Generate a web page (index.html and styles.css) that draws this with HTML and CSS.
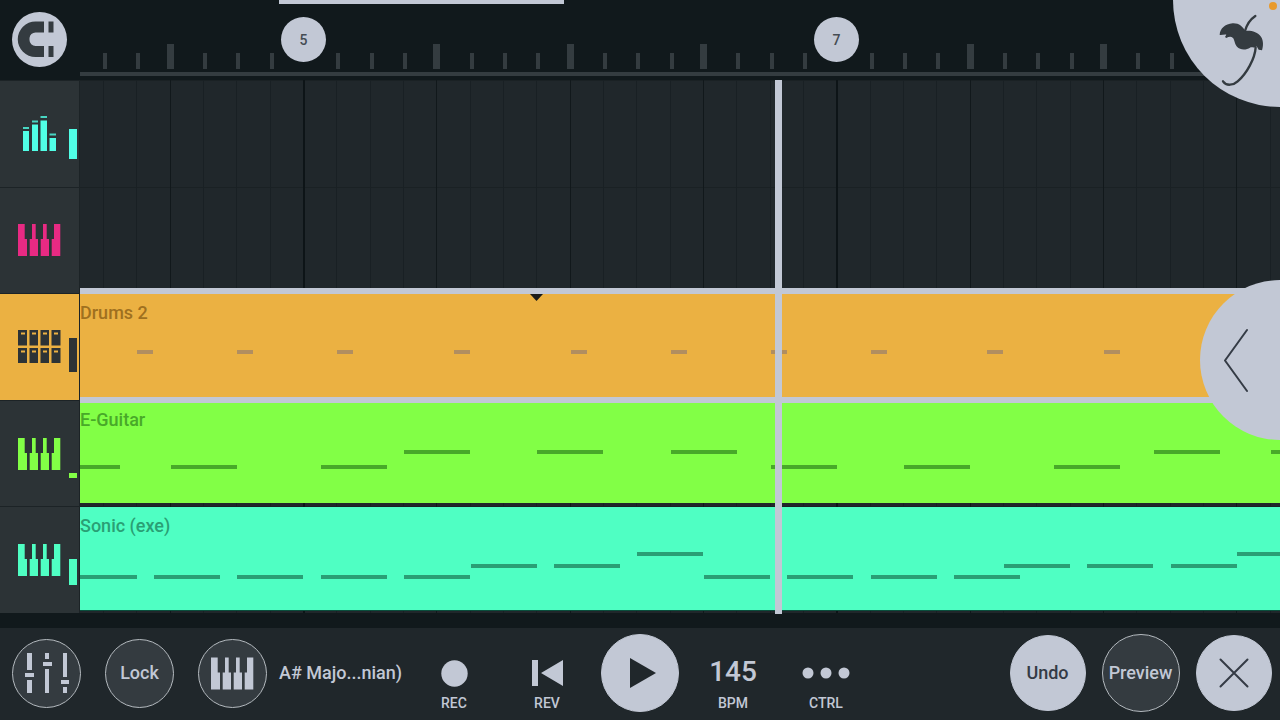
FILE: index.html
```html
<!DOCTYPE html>
<html lang="en">
<head>
  <meta charset="UTF-8" />
  <meta name="viewport" content="width=device-width, initial-scale=1.0"/>
  <title>Playlist</title>
  <link rel="stylesheet" href="styles.css">
</head>
<body>
  <svg class="defs" aria-hidden="true">
    <symbol id="keys" viewBox="0 0 43 32">
      <path d="M0 0H6.7V15H9V32H0zM14 0H17.7V15H20V32H11.7V15H14zM25 0H28.7V15H31V32H22.7V15H25zM36 0H42.3V32H33.7V15H36z"/>
    </symbol>
  </svg>

  <header class="topbar">
    <button class="snap" aria-label="Snap">
      <svg width="55" height="55" viewBox="0 0 55 55">
        <path d="M32 9.500H23.500A17.500 17.500 0 0 0 23.500 45H32V34H23.500A6 6 0 0 1 17.500 28V26A6 6 0 0 1 23.500 20.500H32zM36.500 9.500H41.500V20.500H36.500zM36.500 34H41.500V45H36.500z"/>
      </svg>
    </button>
    <div class="ruler">
      <div class="overview"></div>
      <svg class="ticks" id="ticks"></svg>
      <div class="bars" id="bars"></div>
    </div>
  </header>

  <main class="playlist">
    <div class="heads">
      <button class="head teal" aria-label="Master">
        <svg width="43" height="44" viewBox="0 0 43 44">
          <path d="M5 19H11V39H5zM14 12.500H20V39H14zM22.500 8.500H29V39H22.500zM31.500 26H38V39H31.500z"/>
          <path class="peaks" d="M5 15H11V17H5zM14 8.500H20V10.500H14zM22.500 4H29V6H22.500zM31.500 21.500H38V23.500H31.500z"/>
        </svg>
        <span class="meter" style="height: 30px"></span>
      </button>
      <button class="head pink" aria-label="Synth">
        <svg width="43" height="32"><use href="#keys"/></svg>
        <span class="meter" style="height: 0"></span>
      </button>
      <button class="head active" aria-label="Drums 2">
        <svg width="43" height="33" viewBox="0 0 43 33">
          <path fill-rule="evenodd" d="M0 0h9v15.500H0zM3 2.500v2h4v-2zM11.500 0h8.500v15.500h-8.500zM14 2.500v2h4v-2zM22.500 0h8.500v15.500h-8.500zM25 2.500v2h4v-2zM33.500 0h9v15.500h-9zM36 2.500v2h4v-2zM0 18h9v15H0zM3 20.500v2h4v-2zM11.500 18h8.500v15h-8.500zM14 20.500v2h4v-2zM22.500 18h8.500v15h-8.500zM25 20.500v2h4v-2zM33.500 18h9v15h-9zM36 20.500v2h4v-2z"/>
        </svg>
        <span class="meter" style="height: 34px"></span>
      </button>
      <button class="head green" aria-label="E-Guitar">
        <svg width="43" height="32"><use href="#keys"/></svg>
        <span class="meter" style="height: 5px"></span>
      </button>
      <button class="head mint" aria-label="Sonic (exe)">
        <svg width="43" height="32"><use href="#keys"/></svg>
        <span class="meter" style="height: 26px"></span>
      </button>
    </div>

    <div class="lanes">
      <svg class="grid" id="grid"></svg>
      <div class="lane"></div>
      <div class="lane"></div>
      <div class="lane">
        <div class="clip drums selected">
          <span class="clip-name">Drums 2</span>
          <svg class="notes" data-track="drums"><path class="marker" d="M450 0H463L456.500 7z"/></svg>
        </div>
      </div>
      <div class="lane">
        <div class="clip guitar">
          <span class="clip-name">E-Guitar</span>
          <svg class="notes" data-track="guitar"></svg>
        </div>
      </div>
      <div class="lane">
        <div class="clip sonic">
          <span class="clip-name">Sonic (exe)</span>
          <svg class="notes" data-track="sonic"></svg>
        </div>
      </div>
      <div class="playhead" id="playhead"></div>
    </div>
  </main>

  <footer class="toolbar">
    <div class="tools">
      <div class="cell">
        <button class="round small" aria-label="Mixer">
          <svg width="44" height="40" viewBox="0 0 44 40">
            <path d="M2 0h5v17H2zM0 20h9v4H0zM2 27h5v13H2zM20 0h4v6h-4zM18 9h9v4h-9zM20 16h4v24h-4zM38 0h4v24h-4zM36 27h8v4h-8zM38 34h4v6h-4z"/>
          </svg>
        </button>
      </div>
      <div class="cell"><button class="round small">Lock</button></div>
      <div class="cell">
        <button class="round small" aria-label="Scale">
          <svg width="43" height="33"><use href="#keys"/></svg>
        </button>
      </div>
      <span class="scale">A# Majo...nian)</span>
    </div>

    <div class="transport">
      <button class="control">
        <span class="glyph"><svg width="27" height="27" viewBox="0 0 27 27"><circle cx="13.500" cy="13.500" r="13.200"/></svg></span>
        <span class="caption">REC</span>
      </button>
      <button class="control">
        <span class="glyph"><svg width="31" height="26" viewBox="0 0 31 26"><path d="M0 0H6V26H0zM31 0V26L9 13z"/></svg></span>
        <span class="caption">REV</span>
      </button>
      <div class="cell">
        <button class="round filled big" aria-label="Play">
          <svg class="play" width="31" height="30" viewBox="0 0 31 30"><path d="M5 0L31 15L5 30z"/></svg>
        </button>
      </div>
      <button class="control">
        <span class="glyph tempo">145</span>
        <span class="caption">BPM</span>
      </button>
      <button class="control">
        <span class="glyph"><svg width="48" height="12" viewBox="0 0 48 12"><circle cx="6" cy="6" r="5.500"/><circle cx="24" cy="6" r="5.500"/><circle cx="42" cy="6" r="5.500"/></svg></span>
        <span class="caption">CTRL</span>
      </button>
    </div>

    <div class="actions">
      <div class="cell"><button class="round filled">Undo</button></div>
      <div class="cell"><button class="round big">Preview</button></div>
      <div class="cell">
        <button class="round filled" aria-label="Close">
          <svg class="stroke" width="30" height="30" viewBox="0 0 30 30"><path d="M1.500 1.500L28.500 28.500M28.500 1.500L1.500 28.500"/></svg>
        </button>
      </div>
    </div>
  </footer>

  <button class="menu" aria-label="Menu">
    <svg width="48" height="73" viewBox="350 40 144 219">
      <path d="M358 103C359 84 374 70 397 68C416 67 427 78 435 91C452 89 472 94 482 108C490 120 489 136 485 149L475 147L469 137C462 144 455 138 449 141C438 148 420 149 410 138C402 129 403 117 398 112C391 106 385 109 378 112L374 109L378 102C371 101 364 104 358 103z"/>
      <path class="trunk" d="M434 91C439 73 450 56 465 46M466 140C464 174 438 220 412 242C399 254 378 257 368 242"/>
    </svg>
    <span class="dot"></span>
  </button>
  <button class="drawer" aria-label="Open panel">
    <svg class="stroke" width="25" height="65" viewBox="0 0 25 65"><path d="M23 2L1 32.500L23 63"/></svg>
  </button>

  <script src="script.js"></script>
</body>
</html>
```

FILE: styles.css
```css
* {
  box-sizing: border-box;
}

body {
  margin: 0;
  min-height: 100vh;
  display: flex;
  flex-direction: column;
  position: relative;
  overflow: hidden;
  background: #11191c;
  color: #c2c8d5;
  font-family: Roboto, "Liberation Sans", sans-serif;
  font-size: 18px;
  font-weight: 500;
}

button {
  margin: 0;
  padding: 0;
  border: 0;
  background: none;
  color: inherit;
  font: inherit;
  cursor: pointer;
}

svg {
  display: block;
  fill: currentColor;
}

.defs {
  position: absolute;
  width: 0;
  height: 0;
}

/* top bar */
.topbar {
  display: flex;
  height: 80px;
}

.snap {
  width: 55px;
  height: 55px;
  margin: 12px 13px 0 12px;
  border-radius: 50%;
  background: #c2c8d5;
  color: #343b40;
}

.ruler {
  flex: 1;
  position: relative;
  overflow: hidden;
}

.overview {
  width: 23.7%;
  height: 4px;
  margin-left: 16.6%;
  background: #c2c8d5;
}

.ticks {
  width: 100%;
  height: 76px;
  position: absolute;
  top: 0;
  left: 0;
  color: #343c40;
}

.bar {
  position: absolute;
  top: 17px;
  width: 45px;
  height: 45px;
  margin-left: -23px;
  border-radius: 50%;
  background: #c2c8d5;
  color: #454c53;
  font-size: 14px;
}

/* playlist */
.playlist {
  flex: 1;
  display: flex;
  margin-bottom: 15px;
}

.heads {
  width: 80px;
  display: flex;
  flex-direction: column;
}

.head {
  flex: 1;
  display: flex;
  align-items: center;
  padding-left: 18px;
  border-top: 1px solid #1c2326;
  border-right: 1px solid #1c2326;
  background: #2c3336;
}

.meter {
  width: 8px;
  margin: 0 0 28px 8px;
  align-self: flex-end;
  background: currentColor;
}

.peaks {
  opacity: 0.8;
}

.teal { color: #50ffe6; }
.pink { color: #e82a83; }
.green { color: #82ff46; }
.mint { color: #4fffc3; }

.head.active {
  background: #ebb142;
  color: #2c3336;
}

.lanes {
  flex: 1;
  position: relative;
  display: flex;
  flex-direction: column;
  background: #20272b;
}

.grid {
  position: absolute;
  width: 100%;
  height: 100%;
}

.grid rect { fill: #192024; }
.grid .beat { fill: #11181b; }
.grid .start { fill: #0d1417; }

.lane {
  flex: 1;
  display: flex;
  border-top: 1px solid #1a2124;
}

.clip {
  flex: 1;
  position: relative;
  margin-bottom: 3px;
}

.clip-name {
  position: absolute;
  top: 9px;
  left: 0;
  line-height: 20px;
}

.notes {
  position: absolute;
  width: 100%;
  height: 100%;
}

.drums {
  background: #ebb142;
  color: #9f701f;
}

.drums .notes { color: #b18e60; }
.notes .marker { fill: #1c1c18; }

.guitar {
  background: #82ff46;
  color: #48a929;
}

.sonic {
  background: #4fffc3;
  color: #2a9f75;
  box-shadow: 0 1px #0a4f3d;
}

.selected {
  z-index: 1;
  box-shadow: 0 -6px #c2c8d5, 0 6px #c2c8d5;
}

.playhead {
  position: absolute;
  z-index: 2;
  top: 0;
  bottom: -1px;
  width: 7px;
  background: #c2c8d5;
}

/* bottom toolbar */
.toolbar {
  display: grid;
  grid-template-columns: 1fr auto 1fr;
  height: 92px;
  background: #20272b;
}

.tools,
.transport,
.actions {
  display: flex;
  align-items: stretch;
}

.tools,
.cell {
  padding-bottom: 2px;
}

.tools .cell {
  padding-bottom: 0;
}

.actions {
  justify-content: flex-end;
}

.cell,
.control {
  width: 93px;
}

.cell {
  display: flex;
  align-items: center;
  justify-content: center;
}

.round {
  width: 76px;
  height: 76px;
  display: flex;
  flex-shrink: 0;
  align-items: center;
  justify-content: center;
  border: 1px solid #b4babf;
  border-radius: 50%;
  background: #343b40;
  line-height: 20px;
}

.round.small {
  width: 69px;
  height: 69px;
}

.round.big {
  width: 78px;
  height: 78px;
}

.round.filled {
  border-color: #c2c8d5;
  background: #c2c8d5;
  color: #343b45;
}

.round .play {
  color: #20272b;
}

.scale {
  align-self: center;
  line-height: 20px;
  white-space: nowrap;
}

.control {
  padding-top: 21px;
  display: flex;
  flex-direction: column;
  align-items: center;
}

.glyph {
  height: 48px;
  display: flex;
  align-items: center;
}

.tempo {
  font-size: 28px;
  line-height: 46px;
  align-items: flex-start;
}

.caption {
  font-size: 14px;
  line-height: 12px;
}

.stroke {
  fill: none;
  stroke: #343b45;
  stroke-width: 2;
  stroke-linecap: round;
}

/* corner and side handles */
.menu,
.drawer {
  position: absolute;
  z-index: 3;
  right: 0;
  background: #c2c8d5;
  color: #343b40;
}

.menu {
  top: 0;
  width: 107px;
  height: 107px;
  padding: 14px 0 0 44px;
  display: flex;
  border-radius: 0 0 0 107px;
}

.trunk {
  fill: none;
  stroke: currentColor;
  stroke-width: 7;
  stroke-linecap: round;
}

.dot {
  position: absolute;
  top: 2px;
  right: 3px;
  width: 8px;
  height: 8px;
  border-radius: 50%;
  background: #e89a2c;
}

.drawer {
  top: calc(50% - 80px);
  width: 80px;
  height: 160px;
  padding-left: 24px;
  border-radius: 80px 0 0 80px;
}
```

FILE: script.js
```javascript
const SVG = "http://www.w3.org/2000/svg";
const FIRST_BAR = 224; // where bar 5 starts
const UNIT = 50 / 3;   // one note slot, 32 of them between two numbered bars

function toX(slot) {
  return Math.round(FIRST_BAR + slot * UNIT);
}

function addRect(parent, x, y, width, height, cls) {
  const rect = document.createElementNS(SVG, "rect");
  rect.setAttribute("x", x);
  rect.setAttribute("y", y);
  rect.setAttribute("width", width);
  rect.setAttribute("height", height);
  if (cls) rect.setAttribute("class", cls);
  parent.appendChild(rect);
}

// [slot, y]
const tracks = {
  drums: {
    length: 1,
    notes: [-10, -4, 2, 9, 16, 22, 28, 34, 41, 48].map(s => [s, 56])
  },
  guitar: {
    length: 4,
    notes: [[-15, 64], [-8, 64], [1, 64], [6, 49], [14, 49], [22, 49], [28, 64], [36, 64], [45, 64], [51, 49], [58, 49]]
  },
  sonic: {
    length: 4,
    notes: [[-14, 68], [-9, 68], [-4, 68], [1, 68], [6, 68], [10, 57], [15, 57], [20, 45], [24, 68],
            [29, 68], [34, 68], [39, 68], [42, 57], [47, 57], [52, 57], [56, 45]]
  }
};

const ticks = document.getElementById("ticks");
const grid = document.getElementById("grid");
addRect(ticks, 0, 72, "100%", 4);

for (let slot = -12; slot < 160; slot += 2) {
  const x = toX(slot);
  if (slot % 32 === 0) {
    addRect(grid, x - 1, 0, 2, "100%", "start");
  } else if (slot % 8 === 0) {
    addRect(ticks, x - 4, 44, 7, 25);
    addRect(grid, x - 1, 0, 1, "100%", "beat");
  } else {
    addRect(ticks, x - 1, 53, 4, 16);
    addRect(grid, x - 1, 0, 1, "100%");
  }
}

[5, 7].forEach((number, i) => {
  const bar = document.createElement("button");
  bar.className = "bar";
  bar.textContent = number;
  bar.style.left = toX(i * 32) + "px";
  document.getElementById("bars").appendChild(bar);
});

document.getElementById("playhead").style.left = toX(28.25) + "px";

document.querySelectorAll(".notes").forEach(svg => {
  const track = tracks[svg.dataset.track];
  track.notes.forEach(([slot, y]) => {
    addRect(svg, toX(slot), y, Math.floor(track.length * UNIT), 4);
  });
});
```
